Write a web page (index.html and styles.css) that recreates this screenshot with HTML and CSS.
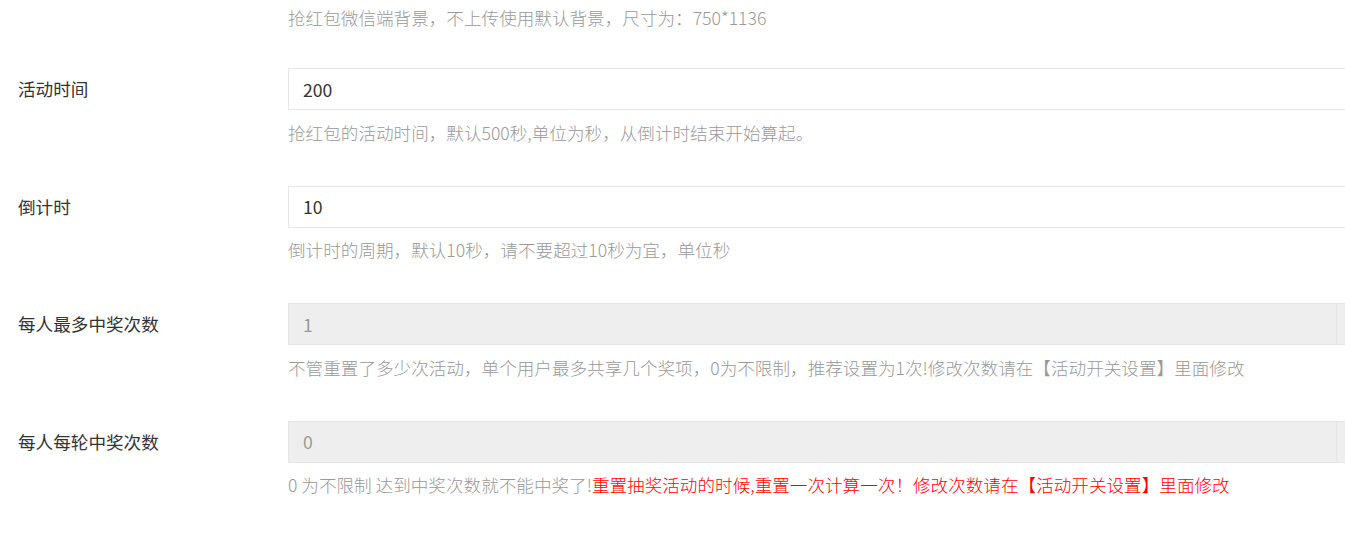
FILE: index.html
```html
<!DOCTYPE html>
<html lang="zh-CN">
<head>
    <meta charset="UTF-8">
    <title>抢红包设置</title>
    <link rel="stylesheet" href="styles.css">
</head>
<body>
    <div class="form">
        <div class="form-group first">
            <div class="label"></div>
            <div class="control">
                <div class="help">抢红包微信端背景，不上传使用默认背景，尺寸为：750*1136</div>
            </div>
        </div>

        <div class="form-group">
            <div class="label">活动时间</div>
            <div class="control">
                <input class="input" type="text" value="200">
                <div class="help">抢红包的活动时间，默认500秒,单位为秒，从倒计时结束开始算起。</div>
            </div>
        </div>

        <div class="form-group">
            <div class="label">倒计时</div>
            <div class="control">
                <input class="input" type="text" value="10">
                <div class="help">倒计时的周期，默认10秒，请不要超过10秒为宜，单位秒</div>
            </div>
        </div>

        <div class="form-group">
            <div class="label">每人最多中奖次数</div>
            <div class="control">
                <div class="input-group">
                    <input class="input" type="text" value="1" disabled>
                    <span class="addon"></span>
                </div>
                <div class="help">不管重置了多少次活动，单个用户最多共享几个奖项，0为不限制，推荐设置为1次!修改次数请在【活动开关设置】里面修改</div>
            </div>
        </div>

        <div class="form-group">
            <div class="label">每人每轮中奖次数</div>
            <div class="control">
                <div class="input-group">
                    <input class="input" type="text" value="0" disabled>
                    <span class="addon"></span>
                </div>
                <div class="help">0 为不限制 达到中奖次数就不能中奖了!<span class="warn">重置抽奖活动的时候,重置一次计算一次！修改次数请在【活动开关设置】里面修改</span></div>
            </div>
        </div>
    </div>
</body>
</html>
```

FILE: styles.css
```css
html, body {
    margin: 0;
    padding: 0;
    background: #fff;
    overflow: hidden;
}
body {
    font-family: "Noto Sans CJK SC", "Liberation Sans", sans-serif;
    font-size: 17.6px;
    color: #333;
    padding-left: 18px;
}
.form {
    width: 1400px;
}
.form-group {
    display: grid;
    grid-template-columns: 270px 1109px;
    align-items: start;
    margin-bottom: 41px;
}
.form-group.first {
    padding-top: 5px;
    margin-bottom: 38px;
}
.label {
    height: 42px;
    line-height: 42px;
    color: #333;
}
.form-group.first .label {
    height: 25px;
}
.control {
    display: flex;
    flex-direction: column;
}
.input {
    box-sizing: border-box;
    height: 42px;
    width: 100%;
    margin: 0;
    padding: 0 14px;
    border: 1px solid #e6e6e6;
    border-radius: 0;
    background: #fff;
    font-family: inherit;
    font-size: 17.6px;
    color: #333;
    outline: none;
}
.input:disabled {
    background: #eeeeee;
    color: #999;
}
.input-group {
    display: flex;
}
.input-group .input {
    width: 1049px;
    flex: none;
}
.addon {
    box-sizing: border-box;
    height: 42px;
    width: 60px;
    background: #eeeeee;
    border: 1px solid #e6e6e6;
    border-left: none;
}
.help {
    margin-top: 9.6px;
    line-height: 25px;
    color: #999;
    font-weight: 300;
    white-space: nowrap;
}
.form-group.first .help {
    margin-top: 0;
}
.warn {
    color: #ff0000;
}
```
